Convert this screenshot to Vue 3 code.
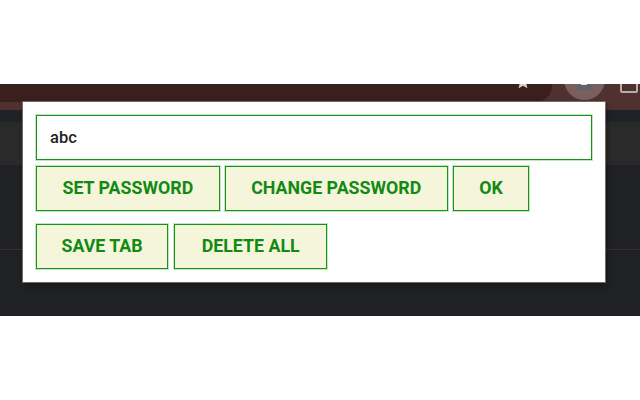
<template>
  <div class="page">
    <div class="browser">
      <div class="toolbar">
        <div class="omnibox">
          <svg class="star" viewBox="0 0 16 16"><path d="M8 1l2.100 4.600 5 .5-3.800 3.300 1.100 4.900L8 11.800l-4.400 2.500 1.100-4.900L.9 6.100l5-.5z" fill="#d9d2d0" /></svg>
        </div>
        <div class="avatar"><span class="avatar-mark"></span></div>
        <div class="ext-icon"></div>
      </div>
      <div class="bookmarks"></div>
      <div class="strip"></div>
      <div class="content"></div>
    </div>
    <div class="popup">
      <input class="pw-input" v-model="text">
      <div class="btn-row first">
        <button v-for="b in firstRow" :key="b">{{ b }}</button>
      </div>
      <div class="btn-row second">
        <button v-for="b in secondRow" :key="b">{{ b }}</button>
      </div>
    </div>
  </div>
</template>

<script setup>
import { ref } from 'vue'

const text = ref('abc')
const firstRow = ['SET PASSWORD', 'CHANGE PASSWORD', 'OK']
const secondRow = ['SAVE TAB', 'DELETE ALL']
</script>

<style>
html, body {
  margin: 0;
  background: #fff;
}
</style>

<style scoped>
.page {
  position: relative;
  width: 640px;
  height: 400px;
  padding-top: 84px;
  box-sizing: border-box;
  overflow: hidden;
  background: #fff;
}

.browser {
  height: 232px;
  display: flex;
  flex-direction: column;
  background: #202124;
}

.toolbar {
  height: 26px;
  flex: none;
  display: flex;
  align-items: flex-start;
  background: #4f3130;
  overflow: hidden;
}

.omnibox {
  width: 552px;
  height: 18px;
  flex: none;
  display: flex;
  justify-content: flex-end;
  align-items: flex-start;
  padding-right: 21px;
  box-sizing: border-box;
  background: #3b1f1c;
  border-bottom-right-radius: 16px;
}

.star {
  width: 16px;
  height: 16px;
  flex: none;
  margin-top: -10px;
}

.avatar {
  position: relative;
  width: 41px;
  height: 41px;
  flex: none;
  margin: -25px 0 0 12px;
  border-radius: 50%;
  background: #7a5f5e;
  display: flex;
  justify-content: center;
  align-items: flex-end;
}

.avatar-mark {
  position: relative;
  width: 16px;
  height: 8px;
  margin-bottom: 10px;
  background: #5f6368;
}

.avatar-mark::before {
  content: "";
  position: absolute;
  left: 4px;
  top: 1px;
  width: 6px;
  height: 2px;
  background: #ece8e8;
}

.ext-icon {
  width: 14px;
  height: 16px;
  flex: none;
  margin: -11px 0 0 15px;
  border: 2px solid #b9abaa;
  border-radius: 2px;
}

.bookmarks {
  height: 12px;
  flex: none;
  background: #1f2227;
}

.strip {
  height: 43px;
  flex: none;
  background: #2a2a2a;
}

.content {
  flex: 1;
  margin-top: 84px;
  border-top: 1px solid #3c3130;
}

.popup {
  position: absolute;
  left: 23px;
  top: 102px;
  width: 582px;
  height: 180px;
  box-sizing: border-box;
  padding: 13px;
  background: #fff;
  box-shadow: 0 0 0 1px rgba(130, 110, 108, .9), 2px 3px 6px rgba(0, 0, 0, .35);
}

.pw-input {
  display: block;
  width: 556px;
  height: 45px;
  box-sizing: border-box;
  padding: 0 13px 1px;
  border: 1px solid #159415;
  border-radius: 0;
  outline: none;
  background: #fff;
  color: #222;
  box-shadow: 0 0 0 1px rgba(21, 148, 21, .25);
  font: 500 16.5px Roboto, sans-serif;
}

.btn-row {
  display: flex;
  gap: 5px;
  margin-top: 6px;
}

.btn-row.second {
  margin-top: 13px;
  gap: 6px;
}

button {
  height: 45px;
  padding: 0 25.5px 3px;
  box-sizing: border-box;
  border: 1px solid #159415;
  border-radius: 0;
  background: #f5f5dc;
  color: #128a12;
  box-shadow: 0 0 0 1px rgba(21, 148, 21, .25);
  font: 700 17.8px Roboto, sans-serif;
  white-space: nowrap;
}

.btn-row.second button:first-child {
  padding: 0 24.5px 3px;
}

.btn-row.second button:last-child {
  padding: 0 26.5px 3px;
}
</style>
